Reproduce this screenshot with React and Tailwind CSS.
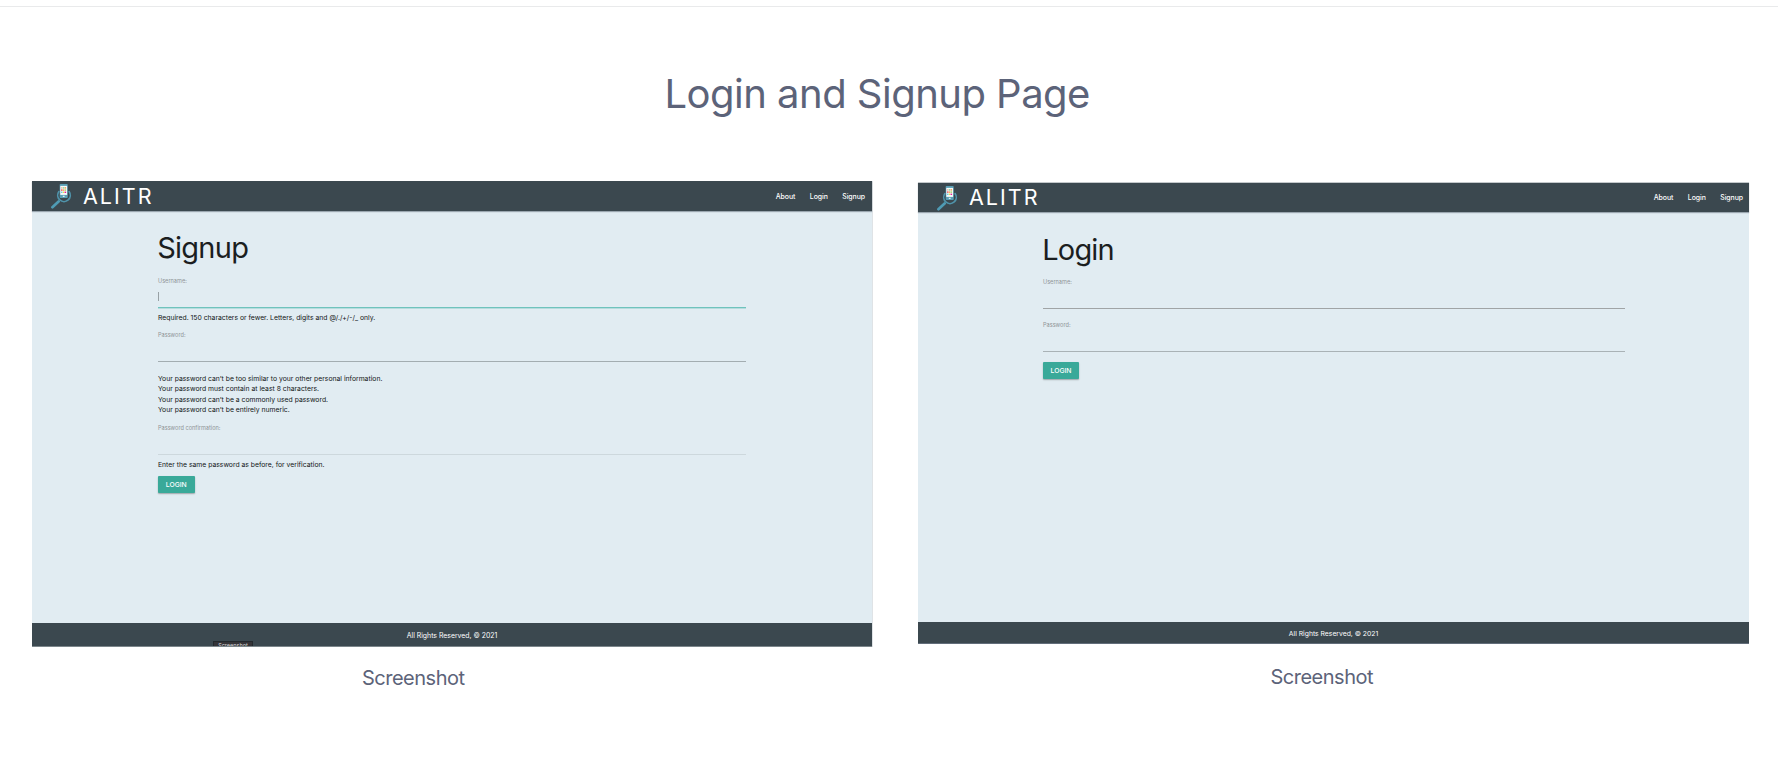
import React from "react";

const DOTS = [
  ["#f6b6a0", 11, 4.2], ["#7bdc9a", 12.8, 4.2], ["#f59a4c", 14.6, 4.2],
  ["#f0505a", 11, 6.4], ["#f59a4c", 12.8, 6.4], ["#9ad96a", 14.6, 6.4],
  ["#6ad0e8", 11, 8.6], ["#e8e04a", 12.8, 8.6], ["#e6189a", 14.6, 8.6],
];

function Logo() {
  return (
    <svg width="22" height="26" viewBox="0 0 22 26" className="shrink-0">
      <path d="M8.6 18.4 L2.4 24.2" stroke="#4f9bb4" strokeWidth="2.7" strokeLinecap="round" />
      <path
        d="M8.9 8.6 A6.3 6.3 0 1 0 19.1 8.6"
        fill="none"
        stroke="#4f93aa"
        strokeWidth="1.7"
        strokeLinecap="round"
      />
      <rect x="9.7" y="1" width="8" height="14" rx="0.8" fill="#5a9fb5" />
      <rect x="10.3" y="2.9" width="6.8" height="9" fill="#f7fafa" />
      <rect x="12.8" y="12.8" width="1.8" height="1" fill="#fff" />
      {DOTS.map(([fill, x, y]) => (
        <rect key={`${x}-${y}`} x={x} y={y} width="1.5" height="1.4" fill={fill} />
      ))}
    </svg>
  );
}

function Navbar({ className = "", brandClass, linksClass }) {
  return (
    <header className={`flex h-[30px] shrink-0 items-start bg-[#3b484f] pl-[18px] text-white shadow-[0_1px_1px_rgba(70,85,95,0.45)] ${className}`}>
      <div className="pt-[2px]">
        <Logo />
      </div>
      <span className={`ml-[11px] text-[21.5px] tracking-[2px] ${brandClass}`}>ALITR</span>
      <nav className={`ml-auto flex gap-[14.5px] text-[6.9px] font-medium tracking-[-0.05px] ${linksClass}`}>
        <span>About</span>
        <span>Login</span>
        <span>Signup</span>
      </nav>
    </header>
  );
}

function Field({ label, className, lineClass, focused }) {
  return (
    <div className={className}>
      <div className="h-[10px] text-[5.6px] leading-[11px] text-[#8f9497]">{label}</div>
      <div className={`flex h-[22px] items-start border-b pt-[6px] ${lineClass}`}>
        {focused && <span className="h-[9px] w-px bg-[#98a1a5]" />}
      </div>
    </div>
  );
}

function Hint({ children, className }) {
  return <p className={`h-[10px] text-[6.82px] leading-[11px] text-[#111516] ${className}`}>{children}</p>;
}

function LoginButton({ className }) {
  return (
    <button className={`flex h-[17px] items-center justify-center rounded-[1px] bg-[#39a999] text-[6.8px] leading-[17px] font-medium text-white shadow-[0_1px_1.5px_rgba(0,0,0,0.3)] ${className}`}>
      LOGIN
    </button>
  );
}

function Caption({ children, className }) {
  return (
    <p className={`text-[20px] leading-[26px] tracking-[-0.5px] text-[#5c6379] ${className}`}>{children}</p>
  );
}

function SignupScreen() {
  return (
    <div className="flex h-[466px] w-[840px] flex-col bg-[#e1ecf2] shadow-[1px_0_0_#dfe3e6]">
      <Navbar brandClass="leading-[30px]" linksClass="pr-[7px] leading-[31px]" />
      <main className="ml-[126px] w-[588px] flex-1 pt-[19px]">
        <h2 className="-ml-[0.8px] h-[35px] text-[29px] leading-[36px] tracking-[-0.75px] text-[#1b1e1f]">Signup</h2>
        <Field
          label="Username:"
          className="mt-[11px]"
          lineClass="border-[#6fc3bd] shadow-[0_1px_0_#b5dcde]"
          focused
        />
        <Hint className="mt-[4px]">Required. 150 characters or fewer. Letters, digits and @/./+/-/_ only.</Hint>
        <Field label="Password:" className="mt-[8px]" lineClass="border-[#a3adb1]" />
        <ul className="mt-[11.5px] text-[6.82px] leading-[10.5px] text-[#111516]">
          <li>Your password can’t be too similar to your other personal information.</li>
          <li>Your password must contain at least 8 characters.</li>
          <li>Your password can’t be a commonly used password.</li>
          <li>Your password can’t be entirely numeric.</li>
        </ul>
        <Field label="Password confirmation:" className="mt-[7.5px]" lineClass="border-[#cdd8dd]" />
        <Hint className="mt-[4px]">Enter the same password as before, for verification.</Hint>
        <LoginButton className="mt-[7px] w-[36.5px]" />
      </main>
      <footer className="relative h-[24px] shrink-0 overflow-hidden border-b border-[#7c868b] bg-[#3b484f] text-center text-[6.9px] leading-[25px] text-white">
        All Rights Reserved, © 2021
        <span className="absolute top-[18px] left-[181px] h-[12px] w-[40px] border border-[#23292d] bg-[#353438] text-center text-[5.5px] leading-[9px] text-[#d5d8da]">
          Screenshot
        </span>
      </footer>
    </div>
  );
}

function LoginScreen() {
  return (
    <div className="flex h-[462px] w-[831px] flex-col bg-[#e1ecf2]">
      <Navbar
        className="border-t border-[#c3c8cb]"
        brandClass="leading-[29px]"
        linksClass="pr-[6px] leading-[30px]"
      />
      <main className="ml-[125px] w-[582px] flex-1 pt-[20px]">
        <h2 className="-ml-[0.8px] h-[34px] text-[29px] leading-[35px] tracking-[-0.8px] text-[#1b1e1f]">Login</h2>
        <Field label="Username:" className="mt-[11px]" lineClass="border-[#a0a4a6]" />
        <Field label="Password:" className="mt-[11px]" lineClass="border-[#a9b2b6]" />
        <LoginButton className="mt-[10px] w-[36px]" />
      </main>
      <footer className="h-[22px] shrink-0 border-b border-[#626d7a] bg-[#3b484f] text-center text-[6.8px] leading-[24px] text-white">
        All Rights Reserved, © 2021
      </footer>
    </div>
  );
}

export default function App() {
  return (
    <div className="flex h-[758px] w-[1778px] flex-col overflow-hidden bg-white font-[Inter,sans-serif]">
      <div className="mt-[6px] h-px shrink-0 bg-[#e9eaeb]" />
      <h1 className="mt-[62px] h-[50px] shrink-0 pl-[664.5px] text-[40px] leading-[50px] tracking-[-0.52px] text-[#5c6379]">
        Login and Signup Page
      </h1>
      <div className="mt-[62px] flex items-start gap-[46px] pl-[32px]">
        <section>
          <SignupScreen />
          <Caption className="mt-[18px] pl-[330px]">Screenshot</Caption>
        </section>
        <section className="pt-px">
          <LoginScreen />
          <Caption className="mt-[20px] pl-[352.5px]">Screenshot</Caption>
        </section>
      </div>
    </div>
  );
}
